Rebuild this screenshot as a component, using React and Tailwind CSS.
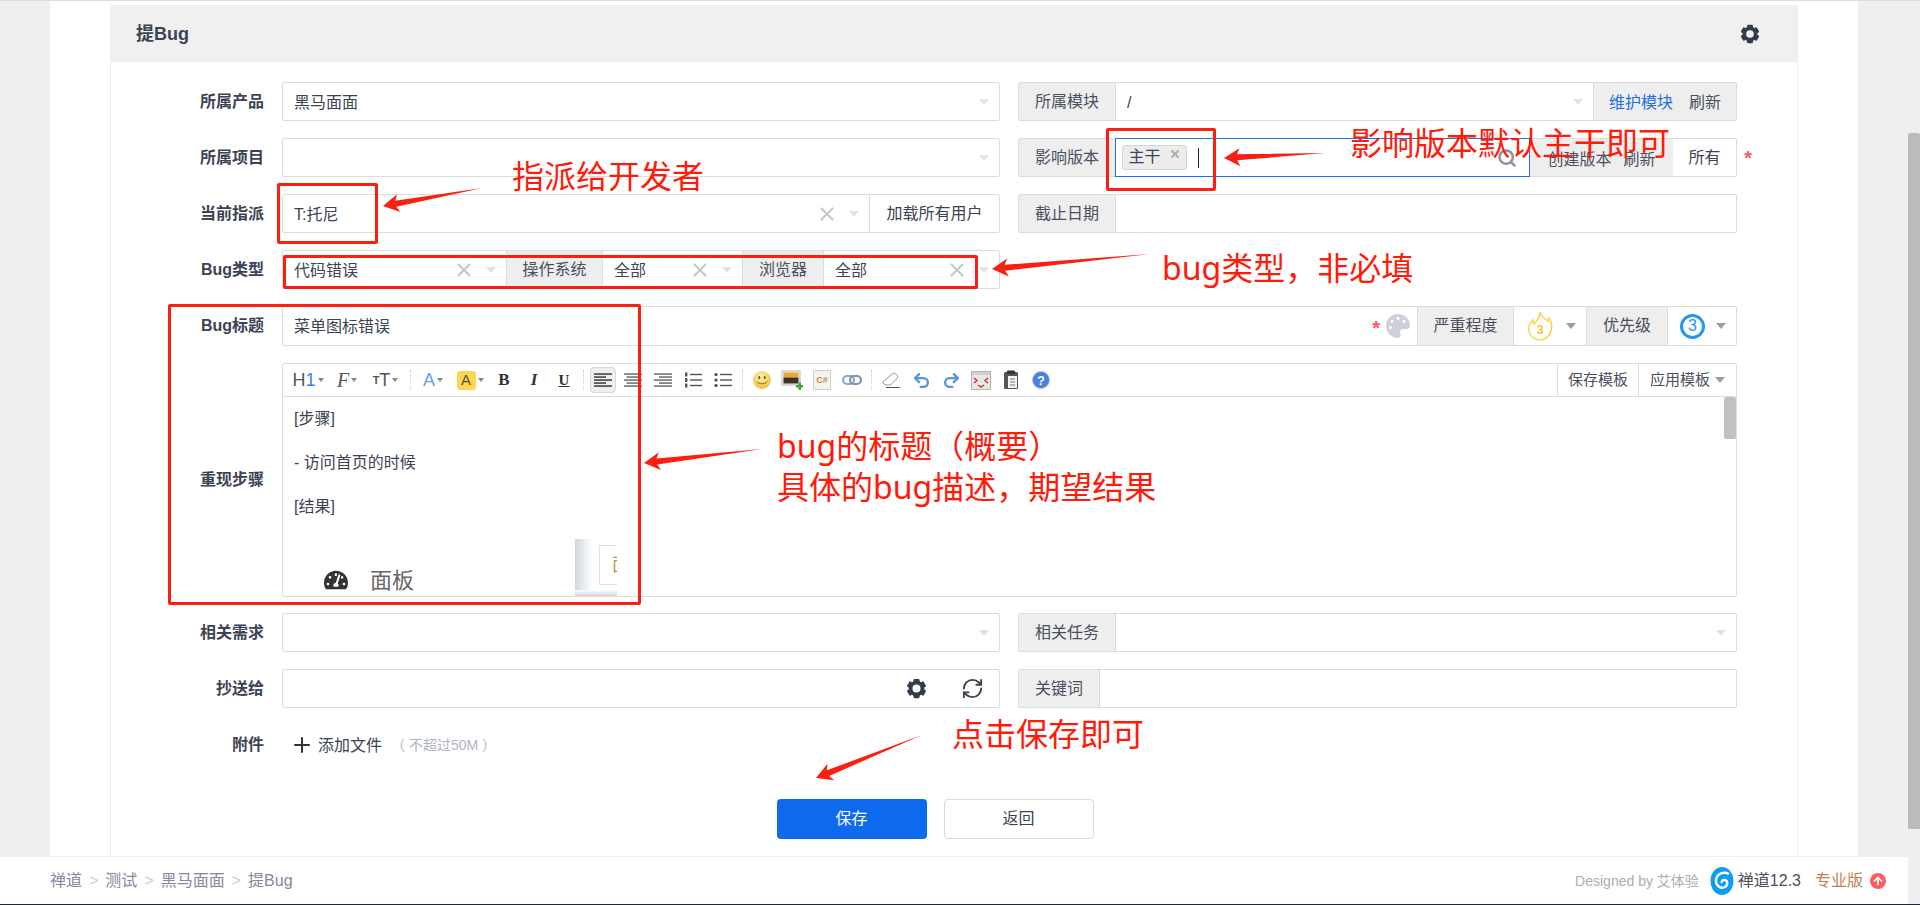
import { X, Search, Plus, RefreshCw, Undo2, Redo2, ArrowUp } from 'lucide-react';
import { FaPalette, FaTachometerAlt } from 'react-icons/fa';

const Caret = ({ light = true, className = '' }) => (
  <span className={`w-0 h-0 border-x-[5px] border-x-transparent border-t-[6px] shrink-0 ${light ? 'border-t-[#dfe2e8]' : 'border-t-[#9a9da3]'} ${className}`}></span>
);

const Clear = () => <X size={22} strokeWidth={2.4} className="text-[#c4c8cf] shrink-0" />;

const Gear = ({ size = 20 }) => (
  <svg width={size} height={size} viewBox="0 0 24 24" className="shrink-0">
    {[0, 60, 120, 180, 240, 300].map((r) => (
      <rect key={r} x="8.500" y="1" width="7" height="5" rx="1.200" fill="#333c4d" transform={`rotate(${r} 12 12)`} />
    ))}
    <circle cx="12" cy="12" r="6.800" fill="none" stroke="#333c4d" strokeWidth="4.400" />
  </svg>
);

// celda tipo select con texto, x y triangulo
const Select = ({ text, clear, caret = true, className = '' }) => (
  <div className={`flex items-center pl-[11px] pr-[10px] min-w-0 ${className}`}>
    <span className="flex-1 truncate pt-[2px]">{text}</span>
    {clear && <Clear />}
    {caret && <Caret className="ml-[11px]" />}
  </div>
);

const Addon = ({ children, className = '' }) => (
  <div className={`flex items-center justify-center shrink-0 h-full bg-[#eeeeee] text-[#4a5060] ${className}`}>{children}</div>
);

const Box = ({ children, className = '' }) => (
  <div className={`flex items-stretch h-full border border-[#dcdcdc] rounded-[2px] overflow-hidden ${className}`}>{children}</div>
);

const Row = ({ label, left, right, className = 'h-[39px] mb-[17px]' }) => (
  <div className={`flex ${className}`}>
    <div className="w-[153px] mr-[18px] shrink-0 flex items-center justify-end font-bold text-[#3c4353]">{label}</div>
    {left}
    {right}
  </div>
);

const Sep = () => <span className="h-[20px] mx-[4px] border-l border-dotted border-[#c8c8c8] shrink-0"></span>;

const TB = ({ children, className = 'w-[30px]' }) => (
  <span className={`flex items-center justify-center h-[26px] shrink-0 ${className}`}>{children}</span>
);

const SmallCaret = () => <span className="ml-[2px] w-0 h-0 border-x-[3px] border-x-transparent border-t-[4px] border-t-[#888]"></span>;

const Lines = ({ align }) => {
  const ys = [2, 5, 8, 11, 14];
  const short = align === 'left' ? [18, 12, 18, 12, 18] : [18, 13, 18, 13, 18];
  return (
    <svg width="18" height="16" viewBox="0 0 18 16">
      {ys.map((y, i) => {
        const w = short[i];
        const x = align === 'left' ? 0 : align === 'center' ? (18 - w) / 2 : 18 - w;
        return <rect key={y} x={x} y={y - 0.6} width={w} height="1.3" fill={align === 'left' ? '#222' : '#555'} />;
      })}
    </svg>
  );
};

const ListIcon = ({ ordered }) => (
  <svg width="18" height="16" viewBox="0 0 18 16">
    {[2.5, 8, 13.5].map((y) => (
      <g key={y}>
        {ordered ? <rect x="1" y={y - 2} width="2.4" height="4" fill="#555" /> : <circle cx="2" cy={y} r="1.6" fill="#444" />}
        <rect x="6" y={y - 0.7} width="12" height="1.4" fill="#555" />
      </g>
    ))}
  </svg>
);

const Smile = () => (
  <svg width="20" height="20" viewBox="0 0 20 20">
    <defs>
      <radialGradient id="smile" cx="45%" cy="35%" r="70%">
        <stop offset="0%" stopColor="#fff3a8" />
        <stop offset="100%" stopColor="#efb93a" />
      </radialGradient>
    </defs>
    <circle cx="10" cy="10" r="9" fill="url(#smile)" />
    <ellipse cx="7.3" cy="7.5" rx="1" ry="1.6" fill="#6b5210" />
    <ellipse cx="12.7" cy="7.5" rx="1" ry="1.6" fill="#6b5210" />
    <path d="M5 11.5c1.5 3 8.5 3 10 0" stroke="#8a6a14" strokeWidth="1" fill="none" />
  </svg>
);

const ImageIcon = () => (
  <svg width="22" height="20" viewBox="0 0 22 20">
    <rect x="1" y="1" width="18" height="14" fill="#f0f0f0" stroke="#aaa" strokeWidth="0.8" />
    <rect x="2.5" y="2.5" width="15" height="5" fill="#f2a52c" />
    <rect x="2.5" y="7.5" width="15" height="6" fill="#3a3226" />
    <path d="M15 15h2.500v-2.500h2.500v2.500h2v2.500h-2v2.500h-2.500v-2.500h-2.500z" fill="#3fa548" />
  </svg>
);

const CodeIcon = () => (
  <span className="flex items-center justify-center w-[18px] h-[20px] bg-[#f6f3ec] border border-[#cfcfcf] text-[9px] leading-none font-bold text-[#b98a58]">C#</span>
);

const LinkIcon = () => (
  <svg width="20" height="12" viewBox="0 0 20 12">
    <rect x="1" y="2" width="11" height="8" rx="4" fill="none" stroke="#8fa7c9" strokeWidth="2.200" />
    <rect x="8" y="2" width="11" height="8" rx="4" fill="none" stroke="#7a93b8" strokeWidth="2.200" />
  </svg>
);

const Eraser = () => (
  <svg width="20" height="18" viewBox="0 0 20 18">
    <path d="M2 11 11 3c2-1.500 5 0 5.500 2 .2 1-.2 2-1 3l-6 6H6c-2 0-4.500-1.500-4-3z" fill="#fff" stroke="#8d97a6" strokeWidth="1" />
    <path d="M5 16.500h14" stroke="#555" strokeWidth="1.200" />
  </svg>
);

const MaxIcon = () => (
  <svg width="20" height="19" viewBox="0 0 20 19">
    <rect x="0.500" y="0.500" width="19" height="18" fill="#e8e8e8" stroke="#b5b5b5" />
    <rect x="1" y="1" width="18" height="3" fill="#cfcfcf" />
    <path d="M3 7l3 2.500-3 2.500M17 7l-3 2.500 3 2.500M7 14l3 2 3-2" stroke="#c0392b" strokeWidth="1.500" fill="none" />
  </svg>
);

const PasteIcon = () => (
  <svg width="18" height="20" viewBox="0 0 18 20">
    <rect x="2" y="2" width="14" height="17" rx="1.500" fill="#555" />
    <rect x="5" y="0.500" width="8" height="3.500" rx="1" fill="#333" />
    <path d="M6 6h9v12H6z" fill="#f2f2f2" />
    <path d="M8 9h5M8 12h5M8 15h5" stroke="#777" strokeWidth="1" />
  </svg>
);

const HelpIcon = () => (
  <span className="flex items-center justify-center w-[18px] h-[18px] rounded-full bg-[#4d7fdc] border border-[#a9c3ee] text-white text-[13px] font-bold leading-none">?</span>
);

const Logo = () => (
  <svg width="24" height="28" viewBox="0 0 24 28" className="shrink-0">
    <ellipse cx="12" cy="14" rx="11.500" ry="14" fill="#0e9bf2" />
    <path d="M19 7c-6-3-13 0-13 7 0 5 5 8 9 6 3-1.500 3-6 0-7-2-.6-4 1-3 3" stroke="#fff" strokeWidth="2.400" fill="none" />
  </svg>
);

// flecha de anotacion: cola fina, cabeza ancha
const arrowPoints = ([tx, ty], [px, py]) => {
  const len = Math.hypot(px - tx, py - ty);
  const ux = (px - tx) / len;
  const uy = (py - ty) / len;
  const at = (back, side) => `${px - ux * back - uy * side},${py - uy * back + ux * side}`;
  return [`${tx},${ty}`, at(13, 3), at(16, 9), `${px},${py}`, at(16, -9), at(13, -3)].join(' ');
};

const arrows = [
  [[1325, 152], [1224, 157]],
  [[482, 187], [383, 205]],
  [[1150, 253], [992, 268]],
  [[762, 448], [644, 462]],
  [[922, 734], [816, 777]],
];

const Annotations = () => (
  <div className="absolute inset-0 pointer-events-none text-[#ff1a0a] text-[32px] leading-[38px] [font-family:'Noto_Sans','Noto_Sans_CJK_SC',sans-serif]">
    <svg className="absolute inset-0 w-full h-full">
      {arrows.map(([a, b]) => (
        <polygon key={a[0]} points={arrowPoints(a, b)} fill="#fb1f12" />
      ))}
    </svg>
    <div className="absolute left-[1106px] top-[127px] w-[110px] h-[63px] border-[3px] border-[#fb1f12] rounded-[2px]"></div>
    <div className="absolute left-[277px] top-[182px] w-[101px] h-[61px] border-[3px] border-[#fb1f12] rounded-[2px]"></div>
    <div className="absolute left-[283px] top-[254px] w-[695px] h-[34px] border-[3px] border-[#fb1f12] rounded-[2px]"></div>
    <div className="absolute left-[168px] top-[303px] w-[473px] h-[301px] border-[3px] border-[#fb1f12] rounded-[2px]"></div>
    <div className="absolute left-[512px] top-[156px]">指派给开发者</div>
    <div className="absolute left-[1350px] top-[123px]">影响版本默认主干即可</div>
    <div className="absolute left-[1162px] top-[248px]">bug类型，非必填</div>
    <div className="absolute left-[777px] top-[424px] leading-[41px]">
      bug的标题（概要）<br />具体的bug描述，期望结果
    </div>
    <div className="absolute left-[952px] top-[714px]">点击保存即可</div>
  </div>
);

export default function App() {
  return (
    <div className="relative flex h-[905px] w-full overflow-hidden bg-[#efefef] text-[16px] leading-[22px] text-[#3c4353] border-t border-[#dcdcdc] [font-family:'Liberation_Sans','Noto_Sans_CJK_SC',sans-serif]">
      <div className="flex flex-col w-[1908px] shrink-0">
        {/* contenido */}
        <div className="flex-1 min-h-0 mx-[50px] px-[60px] pt-[4px] bg-white overflow-hidden">
          <div className="h-full border-x border-[#eeeeee]">
            <div className="flex items-center justify-between h-[57px] pl-[25px] pr-[37px] bg-[#f0f0f0]">
              <span className="text-[18px] font-bold">提Bug</span>
              <Gear />
            </div>

            <div className="pt-[20px]">
              <Row
                label="所属产品"
                left={<Box className="w-[718px]"><Select text="黑马面面" className="flex-1" /></Box>}
                right={
                  <Box className="w-[719px] ml-[18px]">
                    <Addon className="w-[97px] border-r border-[#dcdcdc]">所属模块</Addon>
                    <Select text="/" className="flex-1" />
                    <Addon className="w-[143px] gap-[16px] pt-[3px] border-l border-[#dcdcdc]">
                      <span className="text-[#1f6fe5]">维护模块</span><span>刷新</span>
                    </Addon>
                  </Box>
                }
              />
              <Row
                label="所属项目"
                left={<Box className="w-[718px]"><Select text="" className="flex-1" /></Box>}
                right={
                  <div className="relative w-[719px] ml-[18px]">
                    <div className="flex items-stretch h-full border border-[#dcdcdc] rounded-[2px]">
                      <Addon className="w-[96px]">影响版本</Addon>
                      <div className="flex items-center flex-1 pl-[6px] pr-[12px] border border-[#1f6fe5] -my-px">
                        <span className="flex items-center justify-center gap-[8px] w-[65px] h-[25px] bg-[#ececec] border border-[#d3d6dc] rounded-[3px] pb-px">
                          主干 <X size={12} strokeWidth={4} className="text-[#a9adb5] -mt-[6px]" />
                        </span>
                        <span className="ml-[11px] w-px h-[20px] bg-[#222]"></span>
                        <Search size={20} strokeWidth={3} className="ml-auto text-[#8b93a3]" />
                      </div>
                      <Addon className="w-[143px] gap-[12px] pt-[4px]"><span>创建版本</span><span>刷新</span></Addon>
                      <div className="flex items-center justify-center w-[63px]">所有</div>
                    </div>
                    <span className="absolute -right-[15px] top-[9px] text-[20px] text-[#ff5a5f] font-bold">*</span>
                  </div>
                }
              />
              <Row
                label="当前指派"
                left={
                  <Box className="w-[718px]">
                    <Select text="T:托尼" clear className="flex-1" />
                    <div className="flex items-center justify-center w-[130px] border-l border-[#dcdcdc]">加载所有用户</div>
                  </Box>
                }
                right={
                  <Box className="w-[719px] ml-[18px]">
                    <Addon className="w-[97px] border-r border-[#dcdcdc]">截止日期</Addon>
                  </Box>
                }
              />
              <Row
                label="Bug类型"
                left={
                  <Box className="w-[718px]">
                    <Select text="代码错误" clear className="w-[223px]" />
                    <Addon className="w-[97px] border-x border-[#dcdcdc]">操作系统</Addon>
                    <Select text="全部" clear className="w-[139px]" />
                    <Addon className="w-[82px] border-x border-[#dcdcdc]">浏览器</Addon>
                    <Select text="全部" clear className="flex-1" />
                  </Box>
                }
              />
              <Row
                label="Bug标题"
                className="h-[40px] mb-[17px]"
                left={
                  <Box className="w-[1455px]">
                    <div className="flex items-center flex-1 pl-[11px] pt-[2px]">菜单图标错误</div>
                    <span className="self-center text-[20px] text-[#ff5a5f] font-bold mr-[6px] mt-[3px]">*</span>
                    <FaPalette size={24} className="self-center text-[#ccd1d9] mr-[7px]" />
                    <Addon className="w-[96px] border-l border-[#dcdcdc]">严重程度</Addon>
                    <div className="flex items-center w-[74px] pl-[13px] pr-[10px] justify-between border-x border-[#dcdcdc]">
                      <svg width="26" height="30" viewBox="0 0 26 30">
                        <path d="M13 1c1 5 6 7 8 9 0-1 1-2 1-3 3 4 3 9 2 13-1 5-6 9-11 9S3 26 2 20c-1-4 1-8 4-11 0 2 0 3 1 4 3-3 6-6 6-12z" fill="none" stroke="#fbd34d" strokeWidth="1.500" />
                        <text x="13" y="23" textAnchor="middle" fontSize="13" fontWeight="700" fill="#f8c73a">3</text>
                      </svg>
                      <Caret light={false} />
                    </div>
                    <Addon className="w-[80px]">优先级</Addon>
                    <div className="flex items-center w-[69px] pl-[12px] pr-[10px] justify-between border-l border-[#dcdcdc]">
                      <span className="flex items-center justify-center w-[25px] h-[25px] rounded-full border-[3px] border-[#2196f3] text-[#2196f3] text-[16px]">3</span>
                      <Caret light={false} />
                    </div>
                  </Box>
                }
              />
              <Row
                label="重现步骤"
                className="h-[234px] mb-[16px]"
                left={
                  <div className="w-[1455px] border border-[#dcdcdc] rounded-[2px] overflow-hidden">
                    <div className="flex items-center h-[33px] border-b border-[#dcdcdc]">
                      <TB className="w-[46px] pl-[4px]"><span className="text-[18px] text-[#555]">H<span className="text-[#3f82e8]">1</span></span><SmallCaret /></TB>
                      <TB className="w-[36px]"><span className="text-[20px] italic text-[#555] [font-family:'Liberation_Serif',serif]">F</span><SmallCaret /></TB>
                      <TB className="w-[41px]"><span className="text-[11px] font-bold text-[#555]">T</span><span className="text-[18px] text-[#555]">T</span><SmallCaret /></TB>
                      <Sep />
                      <TB className="w-[36px]"><span className="text-[18px] text-[#6b9cf0]">A</span><SmallCaret /></TB>
                      <TB className="w-[38px]"><span className="flex items-center justify-center w-[19px] h-[19px] rounded-[3px] bg-[#fed752] text-[15px] text-[#5b5030]">A</span><SmallCaret /></TB>
                      <TB><span className="text-[17px] font-bold text-[#333] [font-family:'Liberation_Serif',serif]">B</span></TB>
                      <TB><span className="text-[17px] font-bold italic text-[#333] [font-family:'Liberation_Serif',serif]">I</span></TB>
                      <TB><span className="text-[15px] font-bold underline text-[#333] [font-family:'Liberation_Serif',serif]">U</span></TB>
                      <Sep />
                      <TB className="w-[26px] mx-[2px] bg-[#eeeeee] border border-[#d8d8d8] rounded-[4px]"><Lines align="left" /></TB>
                      <TB><Lines align="center" /></TB>
                      <TB><Lines align="right" /></TB>
                      <TB><ListIcon ordered /></TB>
                      <TB><ListIcon /></TB>
                      <Sep />
                      <TB><Smile /></TB>
                      <TB><ImageIcon /></TB>
                      <TB><CodeIcon /></TB>
                      <TB><LinkIcon /></TB>
                      <Sep />
                      <TB><Eraser /></TB>
                      <TB><Undo2 size={19} strokeWidth={3} className="text-[#5b94dc]" /></TB>
                      <TB><Redo2 size={19} strokeWidth={3} className="text-[#5b94dc]" /></TB>
                      <TB><MaxIcon /></TB>
                      <TB><PasteIcon /></TB>
                      <TB><HelpIcon /></TB>
                      <div className="flex h-full ml-auto text-[15px] text-[#4a5060]">
                        <span className="flex items-center justify-center w-[81px] border-l border-[#dcdcdc]">保存模板</span>
                        <span className="flex items-center justify-center w-[98px] gap-[5px] border-l border-[#dcdcdc]">应用模板<Caret light={false} /></span>
                      </div>
                    </div>
                    <div className="flex">
                      <div className="flex-1 pl-[11px] leading-[44px]">
                        <p>[步骤]</p>
                        <p>- 访问首页的时候</p>
                        <p>[结果]</p>
                        <div className="flex items-end w-[323px] h-[58px] mt-[10px] pl-[30px] text-[#666] overflow-hidden">
                          <FaTachometerAlt size={24} className="text-[#333] mb-[5px] shrink-0" />
                          <span className="ml-[22px] text-[22px] leading-[32px] shrink-0">面板</span>
                          <div className="ml-[161px] flex flex-col w-[44px] h-full shrink-0 bg-gradient-to-r from-[#d3d7dc] to-white to-40%">
                            <div className="ml-[24px] mt-[6px] w-[20px] h-[40px] border border-[#dfe2ee] border-r-0 bg-white text-[#c9854f] text-[18px] leading-[38px] pl-[12px] overflow-hidden">面</div>
                            <div className="mt-auto h-[7px] bg-gradient-to-b from-white to-[#c8ccd2]"></div>
                          </div>
                        </div>
                      </div>
                      <div className="w-[12px] h-[200px] shrink-0 bg-white">
                        <div className="h-[42px] bg-[#c1c1c1] rounded-[2px]"></div>
                      </div>
                    </div>
                  </div>
                }
              />
              <Row
                label="相关需求"
                left={<Box className="w-[718px]"><Select text="" className="flex-1" /></Box>}
                right={
                  <Box className="w-[719px] ml-[18px]">
                    <Addon className="w-[97px] border-r border-[#dcdcdc]">相关任务</Addon>
                    <Select text="" className="flex-1" />
                  </Box>
                }
              />
              <Row
                label="抄送给"
                left={
                  <div className="flex justify-end items-center w-[718px] h-full pr-[15px] gap-[34px] border border-[#dcdcdc] rounded-[2px]">
                    <Gear size={21} />
                    <RefreshCw size={23} strokeWidth={2} className="text-[#3c4353]" />
                  </div>
                }
                right={
                  <Box className="w-[719px] ml-[18px]">
                    <Addon className="w-[81px] border-r border-[#dcdcdc]">关键词</Addon>
                  </Box>
                }
              />
              <Row
                label="附件"
                className="h-[40px] mb-[34px]"
                left={
                  <div className="flex items-center pl-[8px]">
                    <Plus size={24} strokeWidth={2} className="text-[#333]" />
                    <span className="ml-[4px] pt-[2px]">添加文件</span>
                    <span className="ml-[9px] text-[14px] text-[#b0b4bc]">（ 不超过50M ）</span>
                  </div>
                }
              />
              <div className="flex justify-center gap-[17px] pr-[38px]">
                <button className="w-[150px] h-[40px] rounded-[4px] bg-[#0d6aed] text-white">保存</button>
                <button className="w-[150px] h-[40px] rounded-[4px] bg-white border border-[#d5d9e2]">返回</button>
              </div>
            </div>
          </div>
        </div>

        {/* pie de pagina */}
        <div className="flex items-center gap-[7px] h-[49px] pl-[50px] pr-[22px] bg-white border-t border-[#eeeeee] shrink-0 text-[#838a9d]">
          <span>禅道</span>
          <span className="text-[#c8ccd4]">&gt;</span>
          <span>测试</span>
          <span className="text-[#c8ccd4]">&gt;</span>
          <span>黑马面面</span>
          <span className="text-[#c8ccd4]">&gt;</span>
          <span>提Bug</span>
          <span className="ml-auto text-[14px] text-[#a9adb6]">Designed by 艾体验</span>
          <span className="ml-[4px]"><Logo /></span>
          <span className="-ml-[3px] text-[#4a5060]">禅道12.3</span>
          <span className="ml-[7px] text-[#c08350]">专业版</span>
          <span className="flex items-center justify-center w-[16px] h-[16px] rounded-full bg-[#ff5d5d] text-white"><ArrowUp size={12} strokeWidth={3.5} /></span>
        </div>
      </div>

      <div className="w-[12px] shrink-0">
        <div className="mt-[132px] h-[696px] bg-[#bbbbbb] rounded-t-[2px]"></div>
      </div>

      <Annotations />
      <div className="absolute left-0 right-0 bottom-0 h-px bg-[#1f2733]"></div>
    </div>
  );
}
